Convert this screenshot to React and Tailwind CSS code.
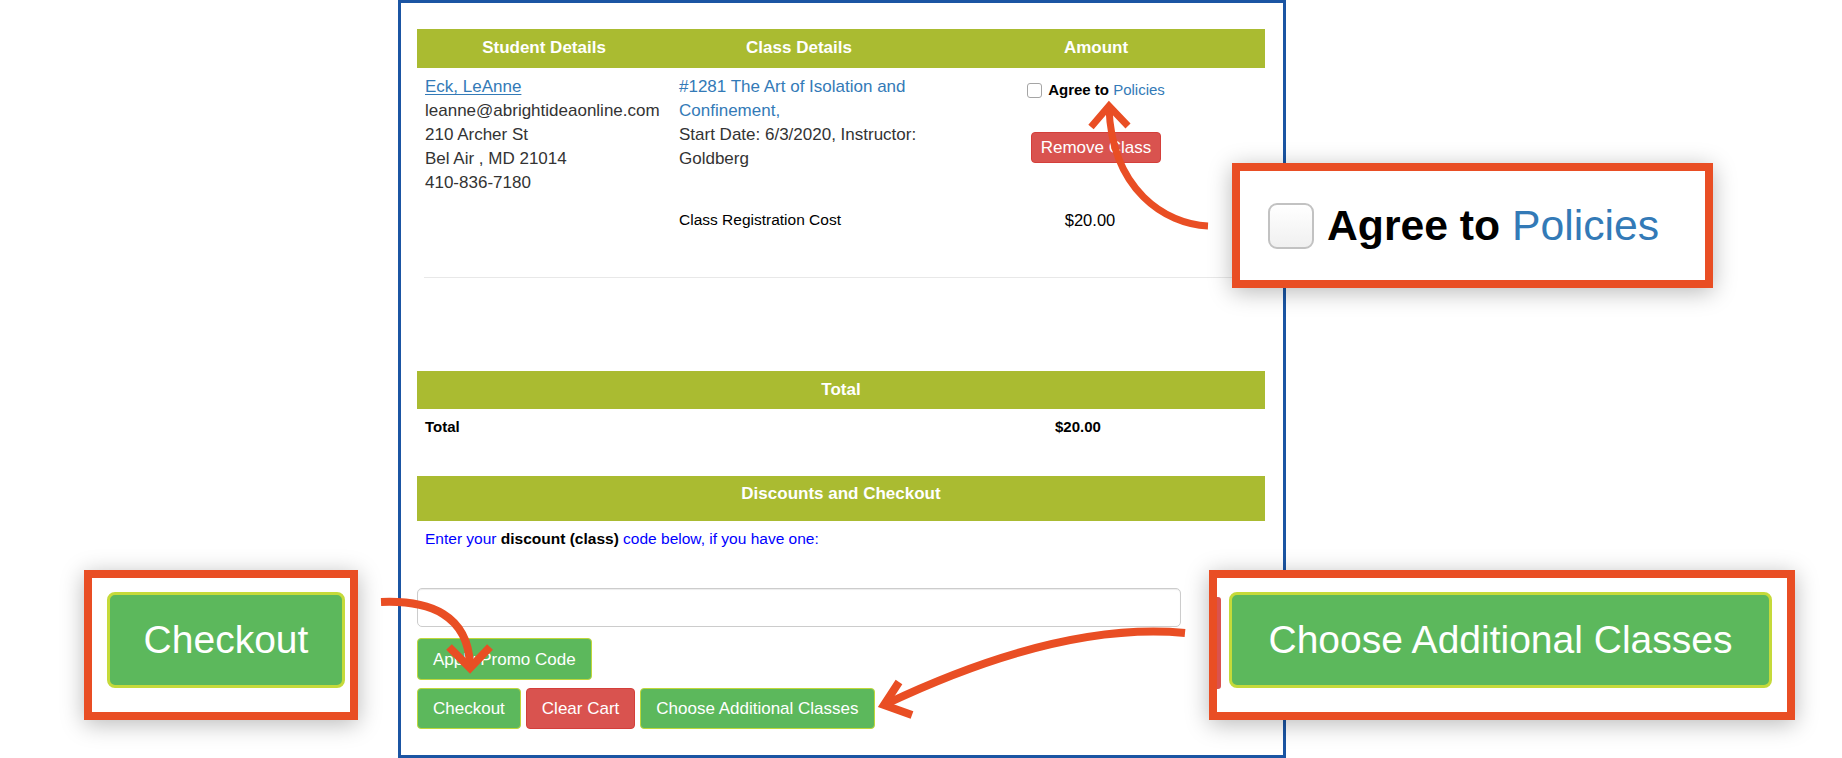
import React from "react";

const cols = "grid grid-cols-[254px_256px_338px]";

const Arrows = () => (
  <svg
    className="absolute left-0 top-0 pointer-events-none"
    width="1842"
    height="758"
    viewBox="0 0 1842 758"
    fill="none"
  >
    <g stroke="#e94e24" fill="none" strokeLinejoin="miter">
      {/* agree callout -> policies */}
      <path d="M1208 226 C1165 224 1112 190 1109 108" strokeWidth="7" />
      <polyline points="1091,127 1109,106 1128,126" strokeWidth="7" />
      {/* checkout callout -> checkout button */}
      <path d="M381 602 C430 600 468 615 470 665" strokeWidth="8" />
      <polyline points="449,647 470,668 490,647" strokeWidth="8" />
      {/* choose classes callout -> button */}
      <path d="M1185 633 C1100 625 1000 650 886 704" strokeWidth="8" />
      <polyline points="899,682 884,705 912,715" strokeWidth="8" />
    </g>
  </svg>
);

const GreenButton = ({ children }) => (
  <button className="h-[41px] px-[15px] bg-[#5cb85c] border-[1.5px] border-[#bfd73a] rounded-[4px] text-white text-[17px] leading-none">
    {children}
  </button>
);

export default function App() {
  return (
    <div className="relative w-[1842px] h-[758px] overflow-hidden bg-white font-['Liberation_Sans',Arial,sans-serif] text-[#333]">
      {/* Cart frame */}
      <div className="ml-[398px] w-[888px] h-[758px] border-[3px] border-[#1b55a3] pl-4 pr-[18px] pt-[26px]">
        {/* Header */}
        <div className={`${cols} bg-[#aabb31] text-white font-bold text-[17px] leading-[24px] pt-[7px] pb-[8px] text-center`}>
          <div>Student Details</div>
          <div>Class Details</div>
          <div>Amount</div>
        </div>

        {/* Class row */}
        <div className={`${cols} text-[17px] leading-[24px] pt-[7px]`}>
          <div className="px-2">
            <a className="text-[#337ab7] underline underline-offset-2">Eck, LeAnne</a>
            <div>leanne@abrightideaonline.com</div>
            <div>210 Archer St</div>
            <div>Bel Air , MD 21014</div>
            <div>410-836-7180</div>
          </div>
          <div className="px-2">
            <a className="block text-[#337ab7]">#1281 The Art of Isolation and Confinement,</a>
            <div>Start Date: 6/3/2020, Instructor: Goldberg</div>
          </div>
          <div className="flex flex-col items-center">
            <div className="flex items-center gap-[6px] mt-[3px] text-[15px] leading-[24px]">
              <input
                type="checkbox"
                className="appearance-none w-[15px] h-[15px] border border-[#a5a5a5] rounded-[3px] bg-white"
              />
              <span className="font-bold text-black">
                Agree to <span className="font-normal text-[#337ab7]">Policies</span>
              </span>
            </div>
            <button className="mt-[30px] h-[31px] px-[9px] bg-[#d9534f] border border-[#d43f3a] rounded-[4px] text-white text-[17px] leading-none">
              Remove Class
            </button>
          </div>
        </div>

        <div className={`${cols} mt-[13px] leading-[24px]`}>
          <div></div>
          <div className="px-2 text-[15.5px] text-black">Class Registration Cost</div>
          <div className="text-center pr-[12px] text-[16.5px] text-black">$20.00</div>
        </div>

        <div className="mt-[45px] ml-[7px] border-t border-[#e8e8e8]"></div>

        {/* Total */}
        <div className="mt-[93px] bg-[#aabb31] text-white font-bold text-[17px] leading-[24px] py-[7px] text-center">
          Total
        </div>
        <div className="mt-[6px] flex text-[15px] leading-[24px] font-bold text-black">
          <div className="w-[638px] pl-2">Total</div>
          <div>$20.00</div>
        </div>

        {/* Discounts */}
        <div className="mt-[37px] bg-[#aabb31] text-white font-bold text-[17px] leading-[24px] pt-[6px] pb-[15px] text-center">
          Discounts and Checkout
        </div>
        <p className="mt-[6px] pl-2 text-[15.5px] leading-[24px] text-[#0000ff]">
          Enter your <b className="text-black">discount (class)</b> code below, if you have one:
        </p>
        <input
          type="text"
          className="block mt-[37px] w-[764px] h-[39px] border border-[#cccccc] rounded-[5px] shadow-[inset_0_1px_1px_rgba(0,0,0,0.075)]"
        />
        <button className="mt-[11px] h-[42px] px-[15px] bg-[#5cb85c] border-[1.5px] border-[#bfd73a] rounded-[4px] text-white text-[17px] leading-none">
          Apply Promo Code
        </button>
        <div className="mt-[8px] flex gap-[5px]">
          <GreenButton>Checkout</GreenButton>
          <button className="h-[41px] px-[15px] bg-[#d9534f] border border-[#d43f3a] rounded-[4px] text-white text-[17px] leading-none">
            Clear Cart
          </button>
          <GreenButton>Choose Additional Classes</GreenButton>
        </div>
      </div>

      {/* Callout: agree to policies */}
      <div className="absolute left-[1232px] top-[163px] w-[481px] h-[125px] border-[8px] border-[#e94e24] bg-white shadow-[0_4px_22px_rgba(0,0,0,0.28)] flex items-center pl-[28px]">
        <span className="w-[46px] h-[46px] rounded-[9px] border-2 border-[#c2c2c2] bg-gradient-to-b from-white to-[#f0f0f0]"></span>
        <span className="ml-[13px] text-[42.7px] font-bold text-black leading-none">
          Agree to <span className="font-normal text-[#337ab7]">Policies</span>
        </span>
      </div>

      {/* Callout: checkout */}
      <div className="absolute left-[84px] top-[570px] w-[274px] h-[150px] border-[8px] border-[#e94e24] bg-white shadow-[0_4px_22px_rgba(0,0,0,0.28)] pt-[14px] pl-[15px]">
        <div className="w-[238px] h-[96px] flex items-center justify-center bg-[#5cb85c] border-[3px] border-[#c5da3a] rounded-[8px] text-white text-[39px]">
          Checkout
        </div>
      </div>

      {/* Callout: choose additional classes */}
      <div className="absolute left-[1209px] top-[570px] w-[586px] h-[150px] border-[8px] border-[#e94e24] bg-white shadow-[0_4px_22px_rgba(0,0,0,0.28)] flex pt-[14px]">
        <div className="w-[4px] h-[92px] mt-[5px] bg-[#d9534f] rounded-r-[3px]"></div>
        <div className="ml-[8px] w-[543px] h-[96px] flex items-center justify-center bg-[#5cb85c] border-[3px] border-[#c5da3a] rounded-[8px] text-white text-[39px]">
          Choose Additional Classes
        </div>
      </div>

      <Arrows />
    </div>
  );
}
